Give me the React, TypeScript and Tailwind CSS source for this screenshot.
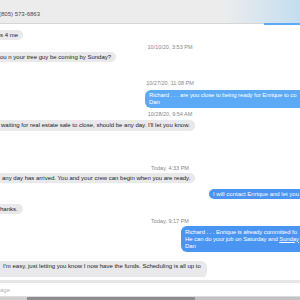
import React from "react";

const font = { fontFamily: '"Liberation Sans", Arial, sans-serif' };

const Stamp = ({ text, mt }: { text: string; mt: string }) => (
    <div className={`flex justify-center pl-[40px] ${mt}`}>
        <span className="text-[5.5px] leading-[7px] text-[#86868b] font-medium whitespace-nowrap">{text}</span>
    </div>
);

export default function App() {
    return (
        <div className="w-[300px] h-[300px] overflow-hidden bg-white flex flex-col text-[6px]" style={font}>
            {/* header */}
            <div className="h-[24px] shrink-0 border-b border-[#d6d6d6] bg-gradient-to-r from-[#ececec] via-[#ececec] via-75% to-[#c3def0] relative">
                <div className="pt-[10px] -ml-[1px] text-[6px] leading-[8px] text-[#4a4a4a]">(805) 573-6863</div>
                <div className="absolute right-0 -bottom-[2px] w-[36px] h-[2px] bg-[#5aaaf6]" />
            </div>

            <div className="flex flex-col flex-1 overflow-hidden">
                <div className="mt-[6px] flex">
                    <div className="-ml-[5px] pl-[5px] pr-[5px] h-[10px] leading-[10px] rounded-[5px] bg-[#e9e9eb] text-[#1c1c1e] whitespace-nowrap">s 4 me</div>
                </div>

                <Stamp text="10/10/20, 3:53 PM" mt="mt-[4px]" />

                <div className="mt-[1px] flex">
                    <div className="-ml-[5px] pl-[5px] pr-[5px] h-[10px] leading-[10px] rounded-[5px] bg-[#e9e9eb] text-[#1c1c1e] whitespace-nowrap">ou n your tree guy be coming by Sunday?</div>
                </div>

                <Stamp text="10/27/20, 11:08 PM" mt="mt-[18px]" />

                <div className="mt-[3px] flex">
                    <div className="ml-[145px] pl-[4px] pr-[30px] py-[2px] leading-[7px] tracking-[-0.1px] rounded-[6px] bg-[#5caaf6] text-white whitespace-nowrap">
                        <div>Richard . . . are you close to being ready for Enrique to co</div>
                        <div>Dan</div>
                    </div>
                </div>

                <Stamp text="10/28/20, 9:54 AM" mt="mt-[3px]" />

                <div className="mt-[2px] flex">
                    <div className="-ml-[4px] pl-[5px] pr-[5px] h-[11px] leading-[11px] rounded-[5px] bg-[#e9e9eb] text-[#1c1c1e] whitespace-nowrap">waiting for real estate sale to close, should be any day. I'll let you know.</div>
                </div>

                <Stamp text="Today, 4:33 PM" mt="mt-[34px]" />

                <div className="mt-[1px] flex">
                    <div className="-ml-[3px] pl-[5px] pr-[5px] h-[10px] leading-[10px] rounded-[5px] bg-[#e9e9eb] text-[#1c1c1e] whitespace-nowrap">any day has arrived. You and your crew can begin when you are ready.</div>
                </div>

                <div className="mt-[6px] flex">
                    <div className="ml-[209px] pl-[4px] pr-[30px] h-[10px] leading-[10px] rounded-[5px] bg-[#4a94f2] text-white whitespace-nowrap">I will contact Enrique and let you</div>
                </div>

                <div className="mt-[5px] flex">
                    <div className="-ml-[5px] pl-[5px] pr-[5px] h-[10px] leading-[10px] rounded-[5px] bg-[#e9e9eb] text-[#1c1c1e] whitespace-nowrap">hanks.</div>
                </div>

                <Stamp text="Today, 9:17 PM" mt="mt-[4px]" />

                <div className="mt-[1px] flex">
                    <div className="ml-[181px] pl-[4px] pr-[30px] py-[2.5px] leading-[7px] tracking-[-0.1px] rounded-[6px] bg-[#4a94f2] text-white whitespace-nowrap">
                        <div>Richard . . . Enrique is already committed fo</div>
                        <div>
                            He can do your job on Saturday and <span className="underline">Sunday</span>
                        </div>
                        <div>Dan</div>
                    </div>
                </div>

                <div className="mt-[9px] flex">
                    <div className="-ml-[5px] pl-[8px] pr-[6px] pt-[1.5px] h-[17px] leading-[7px] rounded-[6px] bg-[#e9e9eb] text-[#1c1c1e] whitespace-nowrap">
                        I'm easy, just letting you know I now have the funds. Scheduling is all up to
                    </div>
                </div>
            </div>

            {/* compose */}
            <div className="shrink-0 h-[3px] bg-[#e6e6e6] mt-[3px]" />
            <div className="shrink-0 h-[14px] bg-white border-b border-[#dcdcdc] flex items-center">
                <span className="text-[6px] leading-[8px] text-[#b4b4b4]">age</span>
            </div>
            <div className="shrink-0 h-[3px] flex">
                <div className="w-[27px] bg-[#cfcfcf]" />
                <div className="w-[168px] bg-[#8d8d8f]" />
                <div className="flex-1 bg-[#c2c2c4]" />
            </div>
        </div>
    );
}
